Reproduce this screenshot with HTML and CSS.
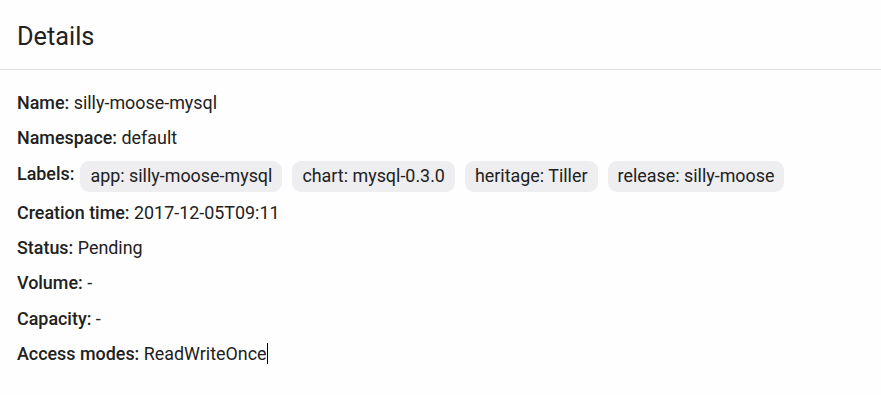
FILE: index.html
```html
<!DOCTYPE html>
<html>
<head>
<meta charset="utf-8">
<link rel="stylesheet" href="styles.css">
</head>
<body>
<div class="card">
  <div class="card-header"><h1 class="title">Details</h1></div>
  <div class="card-body">
    <div class="row"><span class="key">Name:</span> <span class="val">silly-moose-mysql</span></div>
    <div class="row"><span class="key">Namespace:</span> <span class="val">default</span></div>
    <div class="row labels"><span class="key">Labels:</span>
      <span class="chips">
        <span class="chip">app: silly-moose-mysql</span>
        <span class="chip">chart: mysql-0.3.0</span>
        <span class="chip">heritage: Tiller</span>
        <span class="chip">release: silly-moose</span>
      </span>
    </div>
    <div class="row"><span class="key">Creation time:</span> <span class="val">2017-12-05T09:11</span></div>
    <div class="row"><span class="key">Status:</span> <span class="val">Pending</span></div>
    <div class="row"><span class="key">Volume:</span> <span class="val">-</span></div>
    <div class="row"><span class="key">Capacity:</span> <span class="val">-</span></div>
    <div class="row"><span class="key">Access modes:</span> <span class="val caret">ReadWriteOnce</span></div>
  </div>
</div>
</body>
</html>
```
FILE: styles.css
```css
html, body {
  margin: 0;
  padding: 0;
  background: #fefefe;
}
body {
  font-family: Roboto, "Liberation Sans", sans-serif;
  color: #212121;
}
.card-header {
  height: 69px;
  border-bottom: 1px solid #e0e0e0;
  display: flex;
  align-items: center;
  padding: 3px 17px 0;
  box-sizing: border-box;
  height: 70px;
}
.title {
  margin: 0;
  font-size: 25.3px;
  font-weight: 400;
  color: #212121;
}
.card-body {
  padding: 23px 17px 0;
  display: flex;
  flex-direction: column;
  gap: 15.3px;
}
.row {
  font-size: 17.9px;
  line-height: 20px;
}
.key {
  font-weight: 500;
}
.labels {
  display: flex;
  align-items: flex-start;
}
.labels .key {
  margin-right: 6px;
}
.chips {
  display: flex;
  gap: 10px;
  margin-top: -3px;
  margin-bottom: -4px;
}
.chip {
  background: #eeedf0;
  border-radius: 9px;
  padding: 5px 10px 6px;
  line-height: 20px;
}
.caret {
  border-right: 1px solid #000;
}
```
